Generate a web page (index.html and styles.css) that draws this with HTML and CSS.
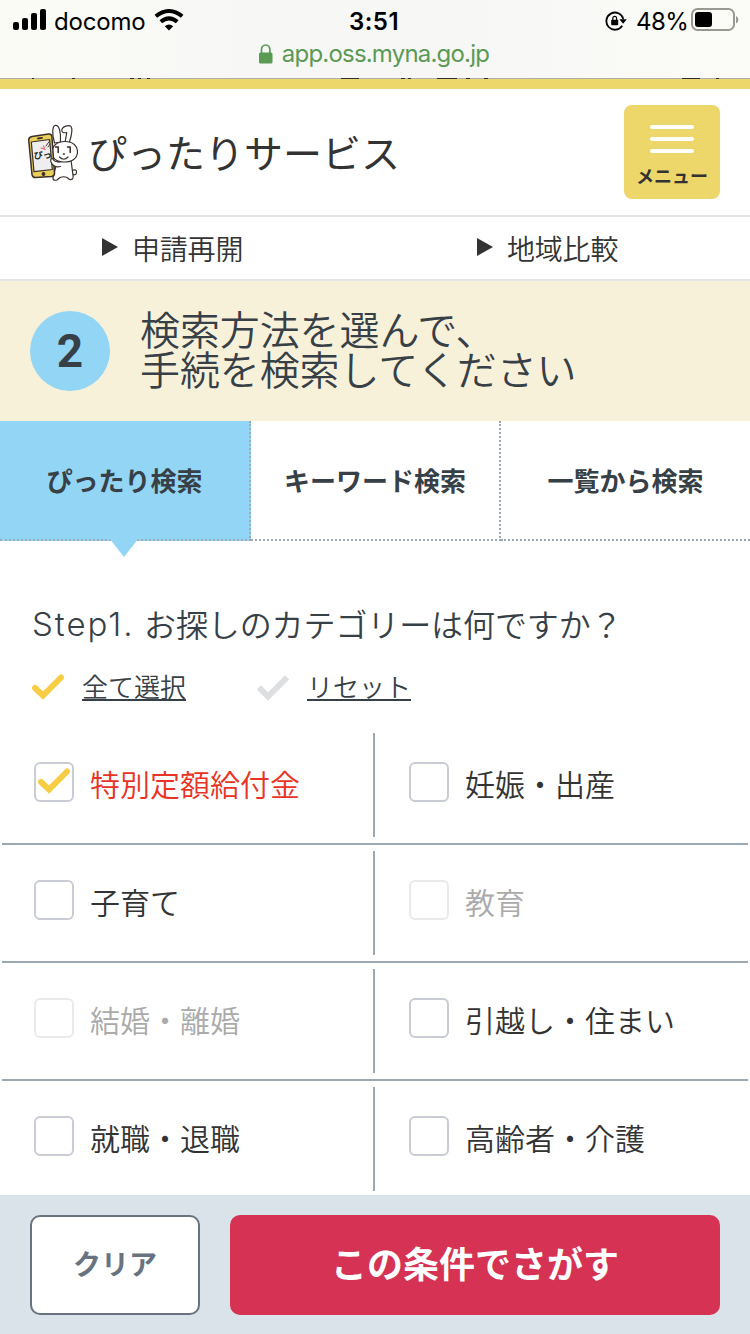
FILE: index.html
```html
<!DOCTYPE html>
<html lang="ja">
<head>
  <meta charset="UTF-8">
  <meta name="viewport" content="width=device-width, initial-scale=1.0">
  <title>ぴったりサービス</title>
  <link rel="stylesheet" href="styles.css">
</head>
<body>
  <div class="statusbar">
    <div class="status-row">
      <div class="status-left">
        <svg class="signal" width="34" height="22" viewBox="0 0 34 22">
          <rect x="0" y="13" width="6" height="8" rx="2"/>
          <rect x="9" y="9" width="6" height="12" rx="2"/>
          <rect x="18" y="4" width="6" height="17" rx="2"/>
          <rect x="27" y="0" width="6" height="21" rx="2"/>
        </svg>
        <span class="carrier">docomo</span>
        <svg class="wifi" width="30" height="22" viewBox="0 0 30 22">
          <path d="M1.800 7.300Q15-3.200 28.200 7.300" fill="none" stroke="#000" stroke-width="4"/>
          <path d="M6.800 12.700Q15 6 23.200 12.700" fill="none" stroke="#000" stroke-width="4"/>
          <path d="M10.800 17.300Q15 13.800 19.200 17.300L15 21.500Z"/>
        </svg>
      </div>
      <div class="clock">3:51</div>
      <div class="status-right">
        <svg class="rotation" width="22" height="20" viewBox="0 0 22 20">
          <path d="M17.200 14.800A8.600 8.600 0 1 1 18.300 8" fill="none" stroke="#000" stroke-width="1.800"/>
          <path d="M14.400 8.300H21.800L18.100 12.800Z"/>
          <rect x="6.200" y="8.700" width="7" height="5.600" rx=".7"/>
          <path d="M7.800 9V7.200a1.900 1.900 0 0 1 3.800 0V9" fill="none" stroke="#000" stroke-width="1.200"/>
        </svg>
        <span class="percent">48%</span>
        <svg class="battery" width="48" height="23" viewBox="0 0 48 23">
          <rect x="1" y="1" width="42" height="21" rx="5.500" fill="none" stroke="#999994" stroke-width="2"/>
          <rect x="4" y="4" width="17" height="15" rx="3"/>
          <path d="M45 8q2.400 1 2.400 3.700T45 15.400z" fill="#999994"/>
        </svg>
      </div>
    </div>
    <div class="url">
      <svg width="14" height="20" viewBox="0 0 14 20">
        <rect x="0" y="8.500" width="13.500" height="11" rx="1.500" fill="#5b9a54"/>
        <path d="M2.500 9V5.800a4.200 4.800 0 0 1 8.400 0V9" fill="none" stroke="#5b9a54" stroke-width="1.700"/>
      </svg>
      <span>app.oss.myna.go.jp</span>
    </div>
    <svg class="edge" width="750" height="1" viewBox="0 0 750 1" fill="#2a2d3a">
      <path d="M32 0h2v1h-2zM72 0h3v1h-3zM130 0h4v1h-4zM138 0h3v1h-3zM147 0h3v1h-3zM341 0h18v1h-18zM401 0h4v1h-4zM408 0h3v1h-3zM437 0h20v1h-20zM466 0h4v1h-4zM484 0h4v1h-4zM682 0h18v1h-18zM716 0h3v1h-3z"/>
    </svg>
  </div>

  <header class="header">
    <div class="logo">
      <svg class="rabbit" width="50" height="58" viewBox="0 0 50 58" fill="#fff" stroke="#3a302c" stroke-width="1.200" stroke-linecap="round" stroke-linejoin="round">
        <path d="M44 46.500q5-2 4.500 2t-5 1"/>
        <path d="M29.500 36L25 53.500q-.5 3.500 4 2.500l3-2.500q4-1.500 7 0l2.500 2q4.500.5 3.500-4L43 36Z"/>
        <path d="M26.500 19C23.500 9 24.500 1.500 27.500 1.300 31.500 1 33 9 32.500 18ZM37 18.500L38.800 8.500Q34 9.500 33.800 6.500C34 2 41 .5 43 2.500 45.500 6 43 13 41 19.500Z"/>
        <path d="M37 17.500c8 0 12.500 4.500 12.500 10.500S44.500 38 36.500 38 24 34 24 28s5-10.500 13-10.500Z"/>
        <path d="M4 12.500L20.500 10q3-.4 3.400 2.500L26.500 49q.2 3-3 3.500L7.500 53.600q-3 0-3.500-3L.7 16q0-3 3.300-3.500Z" fill="#e9ce57" stroke-width="1.500"/>
        <path d="M3.300 18L21.600 15.500 24.300 45.500 6 47.600Z" fill="#eee"/>
        <path d="M27.500 23h2.700v5.500M39.500 23h2.700v5.500" fill="none" stroke="#3b2520" stroke-width="1.500"/>
        <path d="M31.500 33q4.500 4.500 8.500 0" fill="none"/>
        <path d="M35.300 30h1" stroke-width="1.500"/>
        <path d="M10 14.500l4-.6" stroke-width="1.800"/>
        <circle cx="15.500" cy="50" r="1.300" fill="#3a302c"/>
        <path d="M18 22l3.200-4.500M20 23l2-3" fill="none" stroke-width=".9"/>
        <path d="M13 24l4 1.500M15.500 22l1 3" fill="none" stroke="#ec6a78"/>
        <path d="M32 38q-5 .5-7.500-3.500-2.500 0-1.500 3.500 2.500 6 9.500 4.500"/>
        <text class="phone-text" x="6" y="35" transform="rotate(-4 7 36)">ぴっ</text>
      </svg>
      <h1>ぴったりサービス</h1>
    </div>
    <button class="menu">
      <span class="bar"></span>
      <span class="bar"></span>
      <span class="bar"></span>
      <span class="menu-label">メニュー</span>
    </button>
  </header>

  <nav class="subnav">
    <a><span class="triangle"></span>申請再開</a>
    <a><span class="triangle"></span>地域比較</a>
  </nav>

  <div class="lead">
    <div class="number">2</div>
    <h2>検索方法を選んで、<br>手続を検索してください</h2>
  </div>

  <div class="tabs">
    <div class="tab active">ぴったり検索</div>
    <div class="tab">キーワード検索</div>
    <div class="tab">一覧から検索</div>
  </div>

  <main>
    <h3><span class="step">Step1.</span>お探しのカテゴリーは何ですか？</h3>
    <div class="select-links">
      <div class="select-link">
        <svg width="34" height="28" viewBox="0 0 34 28"><path d="M4 15L12 22.500 30 4.500" fill="none" stroke="#f8cd46" stroke-width="6" stroke-linecap="round"/></svg>
        <a>全て選択</a>
      </div>
      <div class="select-link">
        <svg width="34" height="28" viewBox="0 0 34 28"><path d="M5 16.500L12 23.500 29 6.500" fill="none" stroke="#dddfe3" stroke-width="6" stroke-linecap="square"/></svg>
        <a>リセット</a>
      </div>
    </div>

    <div class="categories">
      <div class="row">
        <label class="cell checked"><span class="box"><svg width="34" height="28" viewBox="0 0 34 28"><path d="M4 15L12 22.500 30 4.500" fill="none" stroke="#f8cd46" stroke-width="6" stroke-linecap="round"/></svg></span><span class="name">特別定額給付金</span></label>
        <label class="cell"><span class="box"></span><span class="name">妊娠・出産</span></label>
      </div>
      <div class="row">
        <label class="cell"><span class="box"></span><span class="name">子育て</span></label>
        <label class="cell disabled"><span class="box"></span><span class="name">教育</span></label>
      </div>
      <div class="row">
        <label class="cell disabled"><span class="box"></span><span class="name">結婚・離婚</span></label>
        <label class="cell"><span class="box"></span><span class="name">引越し・住まい</span></label>
      </div>
      <div class="row">
        <label class="cell"><span class="box"></span><span class="name">就職・退職</span></label>
        <label class="cell"><span class="box"></span><span class="name">高齢者・介護</span></label>
      </div>
    </div>
  </main>

  <footer class="actions">
    <button class="clear">クリア</button>
    <button class="search">この条件でさがす</button>
  </footer>
</body>
</html>
```
FILE: styles.css
```css
* {
  box-sizing: border-box;
}
html {
  overflow: hidden;
}
body {
  margin: 0;
  width: 750px;
  height: 1334px;
  display: flex;
  flex-direction: column;
  overflow: hidden;
  background: #fff;
  color: #333;
  font-family: "Noto Sans CJK JP", sans-serif;
  font-weight: 350;
}
h1, h2, h3 {
  margin: 0;
  font-weight: 350;
}
svg {
  display: block;
  flex: none;
}
button {
  font-family: inherit;
  border: none;
  padding: 0;
}

/* status bar */
.statusbar {
  position: relative;
  height: 79px;
  flex: none;
  background: linear-gradient(90deg, #fbfbf6, #f7f7f6 35%, #f7f7f6 60%, #fbfbf7);
  border-bottom: 1px solid #adadad;
  font-family: Inter, sans-serif;
  font-weight: 400;
  color: #000;
}
.status-row {
  display: grid;
  grid-template-columns: 1fr auto 1fr;
  height: 40px;
  padding: 0 11px 0 13px;
}
.status-left, .status-right {
  display: flex;
}
.signal {
  margin-top: 9px;
}
.carrier {
  margin-left: 7px;
  width: 91px;
  font-size: 24px;
  line-height: 43px;
  letter-spacing: -0.2px;
}
.wifi {
  margin: 9px 0 0 9px;
}
.clock {
  margin-left: -4px;
  font-size: 24px;
  line-height: 43px;
  font-weight: 600;
  letter-spacing: 0.5px;
}
.status-right {
  justify-content: flex-end;
}
.rotation {
  margin-top: 11px;
}
.percent {
  margin-left: 9px;
  width: 55px;
  font-size: 24px;
  line-height: 43px;
  letter-spacing: -0.5px;
  white-space: nowrap;
}
.battery {
  margin-top: 8px;
}
.url {
  display: flex;
  justify-content: center;
  gap: 9px;
  padding-right: 2px;
  color: #5b9a54;
  font-size: 24px;
  line-height: 28px;
  letter-spacing: -0.8px;
}
.url svg {
  margin-top: 4px;
}
.edge {
  position: absolute;
  left: 0;
  bottom: -1px;
}

/* header */
.header {
  height: 138px;
  flex: none;
  display: flex;
  justify-content: space-between;
  padding: 16px 30px 0 28px;
  border-top: 10px solid #edd66a;
  border-bottom: 2px solid #e5e5e5;
}
.logo {
  display: flex;
}
.rabbit {
  margin-top: 19px;
}
.phone-text {
  font-size: 9px;
  font-weight: 700;
  fill: #222;
  stroke: none;
}
.logo h1 {
  margin-left: 10px;
  font-size: 39px;
  font-weight: 400;
  line-height: 92px;
}
.menu {
  width: 96px;
  height: 94px;
  padding-top: 20px;
  display: flex;
  flex-direction: column;
  align-items: center;
  background: #edd66a;
  border-radius: 8px;
}
.bar {
  width: 44px;
  height: 4px;
  margin-bottom: 8px;
  border-radius: 2px;
  background: #fff;
}
.menu-label {
  font-size: 18px;
  line-height: 28px;
  font-weight: 700;
  color: #333;
}

.subnav {
  height: 64px;
  flex: none;
  display: grid;
  grid-template-columns: 1fr 1fr;
  border-bottom: 2px solid #e5e5e5;
}
.subnav a {
  display: flex;
  padding-left: 102px;
  font-size: 28px;
  line-height: 62px;
  letter-spacing: -0.2px;
}
.triangle {
  margin: 21px 14px 0 0;
  border-left: 16px solid #333;
  border-top: 9px solid transparent;
  border-bottom: 9px solid transparent;
  height: 0;
}

.lead {
  height: 140px;
  flex: none;
  display: flex;
  padding: 27px 30px 30px;
  background: #f8f1da;
  color: #373f47;
}
.number {
  width: 80px;
  height: 80px;
  margin-top: 3px;
  border-radius: 50%;
  background: #92d5f5;
  font-family: Roboto, sans-serif;
  font-size: 46px;
  font-weight: 700;
  line-height: 80px;
  text-align: center;
}
.lead h2 {
  margin-left: 30px;
  font-size: 40px;
  line-height: 40px;
  letter-spacing: -0.1px;
}

.tabs {
  height: 120px;
  flex: none;
  display: grid;
  grid-template-columns: 251px 250px 249px;
}
.tab {
  position: relative;
  border-right: 2px dotted #9ca9b3;
  border-bottom: 2px dotted #9ca9b3;
  color: #373f47;
  font-size: 26px;
  line-height: 118px;
  font-weight: 700;
  text-align: center;
}
.tab:last-child {
  border-right: none;
}
.tab.active {
  background: #92d5f5;
}
.tab.active::after {
  content: "";
  position: absolute;
  left: 109px;
  top: 117px;
  border-top: 19px solid #92d5f5;
  border-left: 15px solid transparent;
  border-right: 15px solid transparent;
}

main {
  flex: 1;
  min-height: 0;
  overflow: hidden;
}
main h3 {
  display: flex;
  height: 50px;
  margin: 58px 0 0 32px;
  color: #373f47;
  font-size: 32px;
  line-height: 48px;
  letter-spacing: -0.1px;
}
.step {
  width: 112px;
  padding-top: 1px;
  font-family: Inter, sans-serif;
  font-size: 33px;
  font-weight: 300;
  letter-spacing: 2px;
}
.select-links {
  display: flex;
  padding-left: 31px;
  margin-top: 18px;
  height: 60px;
}
.select-link {
  display: flex;
  width: 225px;
}
.select-link svg {
  margin-top: 6px;
}
.select-link a {
  margin-left: 17px;
  height: 34px;
  border-bottom: 2px solid #373f47;
  color: #373f47;
  font-size: 26px;
  line-height: 38px;
}

.row {
  display: grid;
  grid-template-columns: 373px 373px;
  margin: 0 2px;
  height: 118px;
  padding: 6px 0;
  border-bottom: 2px solid #9ca9b3;
}
.row:last-child {
  border-bottom: none;
}
.cell {
  display: flex;
  height: 104px;
  padding-left: 32px;
  border-right: 2px solid #9ca9b3;
}
.cell:last-child {
  padding-left: 34px;
  border-right: none;
}
.box {
  width: 40px;
  height: 40px;
  margin-top: 29px;
  padding: 3px 0 0 1px;
  border: 2px solid #c9cbd5;
  border-radius: 6px;
}
.name {
  margin-left: 16px;
  font-size: 30px;
  line-height: 101px;
}
.checked .name {
  color: #e83325;
}
.disabled {
  color: #aaa;
}
.disabled .box {
  border-color: #e9eaec;
}

/* bottom buttons */
.actions {
  height: 139px;
  flex: none;
  display: flex;
  gap: 30px;
  padding: 20px 30px 19px;
  background: #dbe3ea;
}
.clear {
  width: 170px;
  padding-bottom: 4px;
  border: 2px solid #68737f;
  border-radius: 10px;
  background: #fff;
  color: #68737f;
  font-size: 28px;
  font-weight: 700;
}
.search {
  flex: 1;
  padding-bottom: 6px;
  border-radius: 10px;
  background: #d63254;
  color: #fff;
  font-size: 36px;
  font-weight: 700;
}
```
